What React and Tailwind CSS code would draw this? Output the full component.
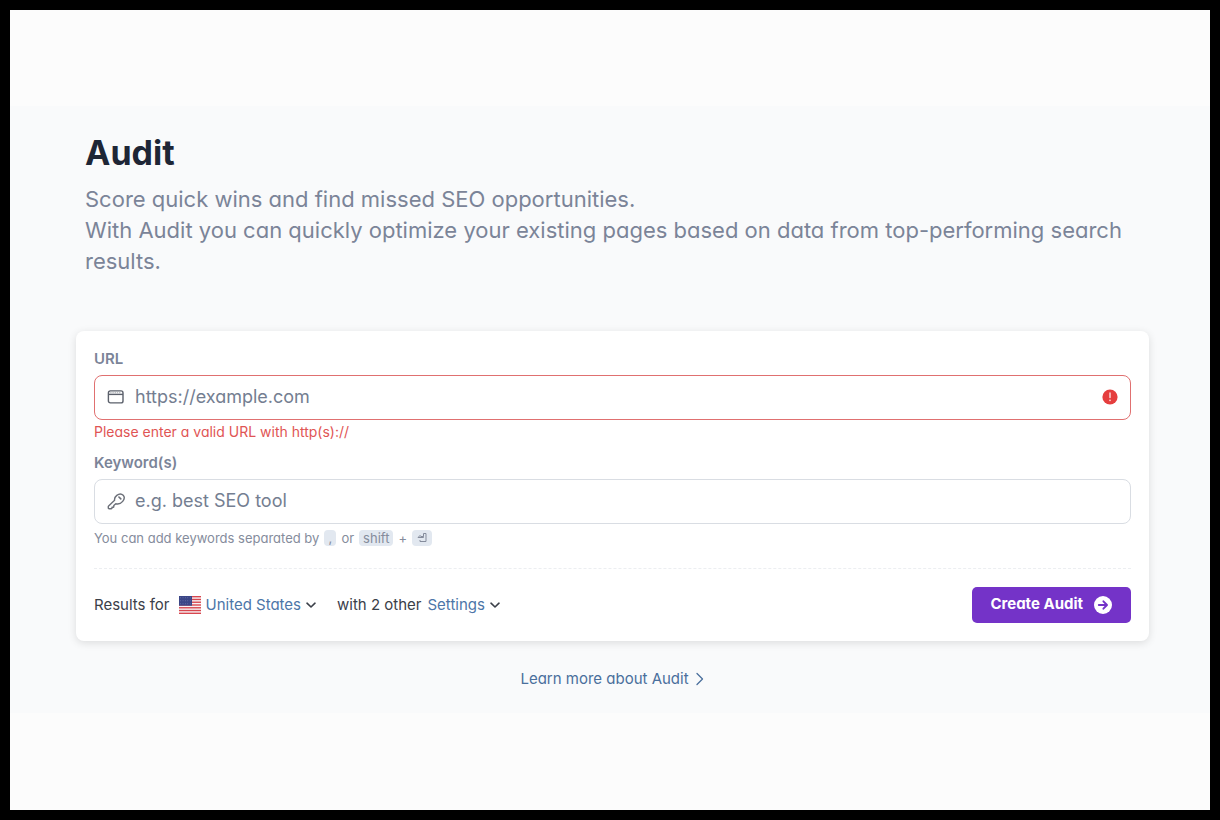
function BrowserIcon() {
  return (
    <svg viewBox="0 0 18 16" className="h-4 w-[18px] shrink-0 text-[#5b606b]" fill="none" stroke="currentColor" strokeWidth="1.4" aria-hidden="true">
      <rect x="1.4" y="1.9" width="14.6" height="12" rx="2" />
      <path d="M1.4 5.4h14.6" />
      <path d="M3.2 3.700h11" strokeWidth="0.8" strokeDasharray="1.400 0.800" opacity="0.6" />
    </svg>
  );
}

function KeyIcon() {
  return (
    <svg viewBox="0 0 18 18" className="h-[18px] w-[18px] shrink-0 text-[#6b6f78]" fill="none" stroke="currentColor" strokeWidth="1.4" strokeLinejoin="round" strokeLinecap="round" aria-hidden="true">
      <path d="M7.600 8.300 1.600 13.900a.9.9 0 0 0-.3.7v1.300c0 .5.3.8.8.8h2.200c.5 0 .7-.3.7-.7v-.8h1.100c.5 0 .7-.4.7-.8v-.8l2-1.900c2.600.6 5.300-.3 6.900-2.300 1.700-2.100 1.900-4.600.5-6.100-1.500-1.500-4.300-1.500-6.400.1-1.700 1.300-2.500 3.200-2.200 4.900z" />
      <path d="m11.900 5 1.900 1.900" strokeWidth="1.600" />
    </svg>
  );
}

function AlertIcon() {
  return (
    <svg viewBox="0 0 16 16" className="h-4 w-4 shrink-0" role="img" aria-label="Error">
      <circle cx="8" cy="8" r="7.6" fill="#e53e3e" />
      <path d="M8 4v4.600" stroke="#fbd5d5" strokeWidth="1.5" strokeLinecap="round" />
      <circle cx="8" cy="11.300" r="0.9" fill="#fbd5d5" />
    </svg>
  );
}

function ChevronDown() {
  return (
    <svg viewBox="0 0 12 12" className="h-3 w-3 shrink-0 text-[#3b4049]" fill="none" stroke="currentColor" strokeWidth="1.6" strokeLinecap="round" strokeLinejoin="round" aria-hidden="true">
      <path d="M2 4.200 6 8l4-3.800" />
    </svg>
  );
}

function UsFlag() {
  return (
    <svg viewBox="0 0 22 18" className="h-[18px] w-[22px] shrink-0" aria-hidden="true">
      <rect width="22" height="18" fill="#f7f3f4" />
      {[0, 1, 2, 3, 4, 5, 6].map((i) => (
        <rect key={i} y={i * 2.77} width="22" height="1.380" fill="#d8474f" />
      ))}
      <rect width="13" height="9.700" fill="#3b4687" />
      {[1.600, 4, 6.400, 8.800, 11.200].map((x) =>
        [1.800, 4.800, 7.800].map((y) => <circle key={`${x}-${y}`} cx={x} cy={y} r="0.35" fill="#a9b0d4" />)
      )}
    </svg>
  );
}

function ArrowCircle() {
  return (
    <svg viewBox="0 0 20 20" className="h-5 w-5 shrink-0" fill="none" aria-hidden="true">
      <circle cx="10" cy="10" r="9" fill="#fff" />
      <path d="M5.800 10h8M10.400 6.300 14 10l-3.600 3.700" stroke="#7433c8" strokeWidth="1.900" strokeLinecap="round" strokeLinejoin="round" />
    </svg>
  );
}

function ReturnIcon() {
  return (
    <svg viewBox="0 0 12 12" className="h-3 w-3" fill="none" stroke="currentColor" strokeWidth="1" role="img" aria-label="Enter">
      <path d="M7.500 1.500h2.500v8H4V8M7.500 1.500V4.500H4.500M4.500 3 2 5.500h5.500V4.500" />
    </svg>
  );
}

const kbd = "inline-flex h-4 items-center justify-center rounded bg-[#e2e8f0] font-[Inter,sans-serif]";

export default function App() {
  return (
    <div className="flex min-h-screen bg-black p-2.5 font-[Inter,sans-serif] text-[#3b4049] [font-feature-settings:'cv11']">
      <main className="flex grow flex-col justify-center bg-[#fcfcfc] pb-0.5">
        <section className="bg-[#f9fafb] pt-6 pr-[61px] pb-[22px] pl-[66px]">
          <header className="px-[9px]">
            <h1 className="text-[34px] leading-[46px] font-bold text-[#1e2636]">Audit</h1>
            <p className="mt-2 text-[22px] leading-[31px] text-[#7b8498]">
              Score quick wins and find missed SEO opportunities.
              <br />
              With Audit you can quickly optimize your existing pages based on data from top-performing search results.
            </p>
          </header>

          <form noValidate onSubmit={(e) => e.preventDefault()} className="mt-[54px] rounded-lg bg-white px-[18px] pt-4 pb-[18px] shadow-[0_2px_8px_rgba(0,0,0,0.12)]">
            <label htmlFor="url" className="block text-[15px] leading-6 font-semibold text-[#7b8498]">
              URL
            </label>
            <div className="mt-1 flex h-[45px] items-center gap-2.5 rounded-lg border border-[#e07070] px-3">
              <BrowserIcon />
              <input id="url" type="url" placeholder="https://example.com" aria-invalid="true" aria-describedby="url-error" className="min-w-0 grow bg-transparent text-lg outline-none placeholder:text-[#747e91]" />
              <AlertIcon />
            </div>
            <p id="url-error" className="mt-0.5 text-sm leading-5 text-[#df5555]">
              Please enter a valid URL with http(s)://
            </p>

            <label htmlFor="keywords" className="mt-[9px] block text-[15px] leading-6 font-semibold text-[#7b8498]">
              Keyword(s)
            </label>
            <div className="mt-1 flex h-[45px] items-center gap-2.5 rounded-lg border border-[#d9dde3] px-3">
              <KeyIcon />
              <input id="keywords" type="text" placeholder="e.g. best SEO tool" aria-describedby="keywords-help" className="min-w-0 grow bg-transparent text-lg outline-none placeholder:text-[#747e91]" />
            </div>
            <p id="keywords-help" className="mt-1 flex items-center gap-[5px] text-[13px] leading-5 text-[#858c9c]">
              You can add keywords separated by
              <kbd className={kbd + " w-3"}>,</kbd>
              or
              <kbd className={kbd + " px-1"}>shift</kbd>
              +
              <kbd className={kbd + " px-1"}>
                <ReturnIcon />
              </kbd>
            </p>

            <div className="mt-5 flex flex-wrap items-center justify-between gap-y-3 border-t border-dashed border-[#eceef1] pt-[18px]">
              <div className="flex items-center text-[15px] leading-6">
                <span>Results for</span>
                <button type="button" className="ml-2.5 flex items-center gap-1 text-[#4d76a8]">
                  <UsFlag />
                  United States
                  <ChevronDown />
                </button>
                <span className="ml-5">with 2 other</span>
                <button type="button" className="ml-1.5 flex items-center gap-1 text-[#4d76a8]">
                  Settings
                  <ChevronDown />
                </button>
              </div>
              <button type="submit" className="flex h-9 items-center gap-2.5 rounded-[5px] bg-[#7433c8] px-[18px] text-[15px] font-bold text-white">
                Create Audit
                <ArrowCircle />
              </button>
            </div>
          </form>

          <div className="mt-[26px] flex justify-center">
            <a href="#learn-more" className="flex items-center gap-1.5 text-[15px] leading-6 text-[#4a6f9c]">
              Learn more about Audit
              <svg viewBox="0 0 10 14" className="h-3.5 w-2.5" fill="none" stroke="currentColor" strokeWidth="1.300" strokeLinecap="round" strokeLinejoin="round" aria-hidden="true">
                <path d="M2 1.500 7.500 7 2 12.500" />
              </svg>
            </a>
          </div>
        </section>
      </main>
    </div>
  );
}
